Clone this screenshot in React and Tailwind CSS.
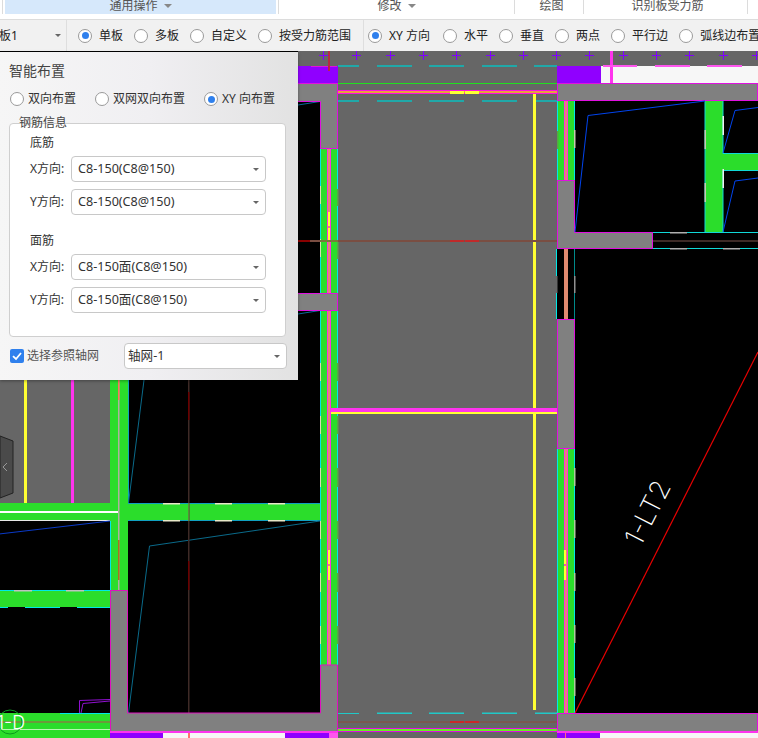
import React from "react";

const FONT = "font-['Noto_Sans','Noto_Sans_CJK_SC',sans-serif]";

function Radio({ on }) {
  return (
    <span className="flex h-[14px] w-[14px] shrink-0 items-center justify-center rounded-full border border-[#9a9a9a] bg-white">
      {on && <span className="h-[7px] w-[7px] rounded-full bg-[#2f80ed]" />}
    </span>
  );
}

function BarRadio({ label, on, w }) {
  return (
    <div className="flex items-center gap-[7px]">
      <Radio on={on} />
      <span className={`whitespace-nowrap text-[12px] leading-none text-[#222] ${w || ""}`}>{label}</span>
    </div>
  );
}

function Caret() {
  return <span className="h-0 w-0 border-x-[3px] border-t-[3px] border-x-transparent border-t-[#666]" />;
}

function Select({ value, w }) {
  return (
    <div className={`flex h-[26px] items-center justify-between rounded-[4px] border border-[#c8c8c8] bg-white pl-[6px] pr-[6px] ${w}`}>
      <span className="whitespace-nowrap text-[12.6px] leading-none text-[#333]">{value}</span>
      <Caret />
    </div>
  );
}

function Row({ label, value }) {
  return (
    <div className="flex items-center">
      <span className="w-[41px] text-[12px] leading-none text-[#333]">{label}</span>
      <Select value={value} w="w-[195px]" />
    </div>
  );
}

function Tab({ w, label, arrow, active, pad }) {
  return (
    <div className={`flex h-[14px] shrink-0 items-start border-r border-[#dcdcdc] ${w}`}>
      <div className={`flex h-[14px] flex-1 items-center justify-center gap-[6px] ${active ? "mr-[2px] bg-[#d6e8fb]" : ""} ${pad || ""}`}>
        <span className="-mt-[2px] whitespace-nowrap text-[12px] leading-none text-[#555]">{label}</span>
        {arrow && <span className="-mt-[2px] h-0 w-0 border-x-[4px] border-t-[4px] border-x-transparent border-t-[#888]" />}
      </div>
    </div>
  );
}

const G = "#2bdd2b", W = "#808080", M = "#e010e0", C = "#00e8e8", BG = "#666666", P = "#9000ff";

function Wall({ x, y, w, h }) {
  return <rect x={x + 0.5} y={y + 0.5} width={w - 1} height={h - 1} fill={W} stroke={M} />;
}

function VBeam({ x, y1, y2 }) {
  const h = y2 - y1;
  return (
    <g>
      <rect x={x} y={y1} width={18} height={h} fill={G} />
      <line x1={x + 0.5} x2={x + 0.5} y1={y1} y2={y2} stroke={C} />
      <line x1={x + 17.5} x2={x + 17.5} y1={y1} y2={y2} stroke={C} />
      <rect x={x + 7} y={y1} width={4} height={h} fill="#e08a70" />
      <line x1={x + 7.5} x2={x + 7.5} y1={y1} y2={y2} stroke="#ff30e0" />
      <line x1={x + 10.5} x2={x + 10.5} y1={y1} y2={y2} stroke="#ff30e0" />
    </g>
  );
}

function Drawing() {
  const crosses = [];
  for (let i = 0; i < 14; i++) crosses.push(Math.round(323 + i * 33.3));
  return (
    <svg className="block h-[687px] w-[758px]" viewBox="0 51 758 687" fontFamily="Inter, sans-serif">
      <rect x="0" y="51" width="758" height="687" fill="#000" />
      <rect x="298" y="51" width="460" height="32" fill={BG} />
      <rect x="338" y="51" width="219" height="687" fill={BG} />
      {crosses.map((x) => (
        <path key={x} d={`M${x - 4} 55.5H${x + 5}M${x + 0.5} 51V60`} stroke="#8000ff" fill="none" />
      ))}
      <rect x="298" y="66" width="40" height="17" fill={P} />
      <line x1="311" x2="337" y1="66.5" y2="66.5" stroke={M} />
      <rect x="557" y="66" width="44" height="17" fill={P} />
      <rect x="601" y="66" width="157" height="17" fill="#f7f7f7" />
      <rect x="610" y="51" width="3" height="32" fill="#ff33ee" />
      {[[603, 637], [655, 690], [707, 742]].map(([a, b]) => (
        <rect key={a} x={a} y="65" width={b - a} height="2" fill="#ff55ee" />
      ))}
      <rect x="328" y="51" width="2" height="20" fill="#b52a40" />
      {[66, 101].map((y) =>
        [[338, 359], [377, 412], [429, 464], [482, 517], [534, 557]].map(([a, b]) => (
          <rect key={y + "-" + a} x={a} y={y - 1} width={b - a} height="2" fill="#20a8a8" />
        ))
      )}
      <line x1="338" x2="557" y1="83.5" y2="83.5" stroke="#20e020" />
      <rect x="338" y="91" width="219" height="3" fill="#e8a040" />
      <line x1="338" x2="557" y1="90.5" y2="90.5" stroke="#ff10e0" />
      <line x1="338" x2="557" y1="93.5" y2="93.5" stroke="#ff10e0" />
      <rect x="450" y="91" width="14" height="3" fill="#ffff33" />
      <rect x="465" y="91" width="14" height="3" fill="#ffff33" />
      <rect x="533" y="94" width="3" height="616" fill="#ffff33" />
      <rect x="298" y="240" width="259" height="2" fill="#7a4e42" />
      <rect x="298" y="240" width="12" height="2" fill="#8a0000" />
      <rect x="450" y="240" width="14" height="2" fill="#c02a2a" />
      <rect x="465" y="240" width="14" height="2" fill="#c02a2a" />
      <rect x="338" y="713" width="21" height="1" fill="#20c8c8" />
      {[[377, 412], [429, 464], [482, 517], [535, 557]].map(([a, b]) => (
        <rect key={a} x={a} y="712.5" width={b - a} height="1.5" fill="#20c8c8" />
      ))}
      <rect x="338" y="721.5" width="219" height="1" fill="#8c4a3c" />
      <rect x="450" y="721" width="14" height="2" fill="#c82a2a" />
      <rect x="465" y="721" width="14" height="2" fill="#c82a2a" />

      <line x1="298" y1="105" x2="320" y2="101.5" stroke="#0a6a9a" />
      <line x1="298" y1="314" x2="320" y2="310.5" stroke="#0a6a9a" />
      <line x1="298" y1="101.5" x2="320" y2="101.5" stroke={M} />

      <VBeam x={320} y1={149} y2={293} />
      <VBeam x={320} y1={310} y2={665} />
      {[[186, 204], [239, 257], [363, 381], [416, 434], [468, 487], [521, 539], [573, 592], [626, 644]].map(([a, b]) => (
        <rect key={a} x="320" y={a} width="1" height={b - a} fill="#d8e0b0" />
      ))}
      {[[189, 206], [242, 259], [363, 381], [416, 434], [468, 487], [521, 539], [573, 592], [626, 644]].map(([a, b]) => (
        <rect key={a} x="337" y={a} width="1.5" height={b - a} fill="#55aa44" />
      ))}
      <rect x="328" y="212" width="2" height="14" fill="#ffff33" />
      <rect x="328" y="228" width="2" height="12" fill="#ffff33" />
      <rect x="328" y="550" width="2" height="14" fill="#ffff33" />
      <rect x="328" y="566" width="2" height="14" fill="#ffff33" />
      <rect x="320" y="240" width="18" height="2" fill="#7a7a3a" />
      <rect x="331" y="408" width="226" height="4" fill="#ff33ee" />
      <rect x="331" y="412" width="226" height="2" fill="#ffff33" />

      <rect x="298" y="83" width="40" height="18" fill={W} />
      <rect x="320" y="83" width="18" height="66" fill={W} />
      <path d="M298 83.5H337.5V148.5H320.5V101.5H298" fill="none" stroke={M} />
      <Wall x={290} y={293} w={48} h={18} />

      <rect x="0" y="380" width="110" height="123" fill={BG} />
      <line x1="110.5" x2="110.5" y1="380" y2="503" stroke={C} />
      <rect x="24" y="380" width="3" height="131" fill="#ffff33" />
      <rect x="71" y="380" width="3" height="131" fill="#ff33ee" />
      <rect x="110" y="380" width="18" height="210" fill={G} />
      <rect x="0" y="503" width="320" height="18" fill={G} />
      <rect x="0" y="511" width="118" height="2" fill="#ffffff" />
      <rect x="118" y="380" width="1.5" height="210" fill="#b0b0a0" />
      <rect x="118" y="380" width="1.5" height="20" fill="#ff7060" />
      <rect x="118" y="540" width="1.5" height="40" fill="#b06a20" />
      <rect x="0" y="520" width="110" height="1" fill="#e8e8e8" />
      <line x1="128" x2="320" y1="503.5" y2="503.5" stroke="#10a0c0" />
      <line x1="128" x2="320" y1="520.5" y2="520.5" stroke="#10a0c0" />
      <line x1="128.5" x2="128.5" y1="380" y2="503" stroke="#10a0c0" />
      <line x1="110.5" x2="110.5" y1="521" y2="590" stroke={C} />
      {[163, 215, 268].map((x) => (
        <g key={x}>
          <rect x={x} y="503" width="17" height="1.5" fill="#e8e8c8" />
          <rect x={x} y="520" width="17" height="1.5" fill="#e8e8c8" />
        </g>
      ))}
      <rect x="0" y="590" width="110" height="18" fill={G} />
      <line x1="0" x2="110" y1="590.5" y2="590.5" stroke={C} />
      <line x1="0" x2="110" y1="607.5" y2="607.5" stroke={C} />
      <rect x="14" y="590" width="18" height="1.5" fill="#c0c0c0" />
      <rect x="66" y="590" width="18" height="1.5" fill="#c0c0c0" />
      <rect x="8" y="607" width="17" height="1.5" fill="#000" />
      <rect x="60" y="607" width="17" height="1.5" fill="#000" />
      <rect x="0" y="713" width="110" height="25" fill={G} />
      <line x1="60" x2="110" y1="713.5" y2="713.5" stroke={C} />
      <rect x="0" y="721" width="110" height="2" fill="#6c9a3a" />
      <rect x="0" y="729" width="110" height="1" fill="#b8f8b0" />
      <path d="M79.5 713L79.5 700.5L110 699.5M81 713L83 703.5L110 701" fill="none" stroke="#9010d0" />
      <circle cx="10" cy="722" r="12" fill="none" stroke="#0a9a20" />
      <text x="-3" y="729" fontSize="18" fill="#ffffff" fontWeight="300">1-D</text>

      <path d="M320 521L149.5 546L128.5 713" fill="none" stroke="#0a6a8a" />
      <path d="M144 380L128.5 503" fill="none" stroke="#0a6a8a" />
      <line x1="-1" y1="534" x2="110" y2="521" stroke="#0a3ac8" />
      <rect x="188" y="380" width="1.5" height="352" fill="#3e2a26" />
      <rect x="188" y="392" width="1.5" height="28" fill="#6a0000" />
      <rect x="188" y="561" width="1.5" height="29" fill="#6a0000" />
      <rect x="188" y="503" width="1.5" height="18" fill="#5a8a3a" />

      <rect x="110" y="590" width="18" height="142" fill={W} />
      <rect x="110" y="713" width="228" height="19" fill={W} />
      <rect x="320" y="665" width="18" height="67" fill={W} />
      <path d="M110.5 731.5V590.5H127.5V713H320.5V665H337.5V731.5Z" fill="none" stroke="#e010c0" />
      <rect x="110" y="732" width="53" height="6" fill={P} />
      <rect x="163" y="733" width="122" height="5" fill="#f7f7f7" />
      <rect x="285" y="733" width="45" height="5" fill={P} />
      <rect x="110" y="731" width="228" height="2" fill="#ff33ee" />
      <rect x="188" y="733" width="2" height="5" fill="#ff7070" />
      <rect x="329" y="733" width="9" height="5" fill="#ff55ee" />
      <rect x="338" y="729" width="219" height="3" fill="#66ee22" />
      <line x1="338" x2="557" y1="728.5" y2="728.5" stroke={M} />
      <line x1="338" x2="557" y1="731.5" y2="731.5" stroke={M} />

      <VBeam x={557} y1={101} y2={180} />
      <rect x="574" y="130" width="1.5" height="18" fill="#c8c8b0" />
      <rect x="557" y="131" width="1.5" height="18" fill="#55aa44" />
      <Wall x={557} y={83} w={201} h={18} />
      <rect x="557" y="180" width="18" height="69" fill={W} />
      <rect x="557" y="232" width="96" height="17" fill={W} />
      <path d="M557.5 248.5V180.5H574.5V232.5H652.5V248.5Z" fill="none" stroke={M} />
      <path d="M705 101L588 115.5L575 232" fill="none" stroke="#0044ee" />
      <rect x="705" y="101" width="18" height="131" fill={G} />
      <rect x="723" y="153" width="35" height="18" fill={G} />
      <path d="M705 101.5V232M723 101V153.5H758M758 170.5H723V232M653 232.5H758M653 248.5H758" fill="none" stroke="#10d8d8" />
      {[[130, 149], [183, 202]].map(([a, b]) => (
        <g key={a}>
          <rect x="704.5" y={a} width="1.5" height={b - a} fill="#c8c8b0" />
          <rect x="722.5" y={a - 14} width="1.5" height={b - a} fill="#f0f0f0" />
        </g>
      ))}
      <path d="M723 153L735 110.5L758 107.5M723 232L735 181L758 178" fill="none" stroke="#0044ee" />
      <rect x="653" y="240" width="105" height="2" fill="#3e2a26" />
      <rect x="670" y="232" width="17" height="1.5" fill="#b0b0b0" />
      <rect x="670" y="248" width="17" height="1.5" fill="#b0b0b0" />
      <rect x="723" y="248" width="17" height="1.5" fill="#b0b0b0" />
      <rect x="564" y="249" width="4" height="70" fill="#e08a70" />
      <line x1="556.5" x2="556.5" y1="249" y2="319" stroke={C} />
      <line x1="574.5" x2="574.5" y1="249" y2="319" stroke="#008a8a" />
      <rect x="574" y="276" width="1.5" height="17" fill="#909090" />
      <rect x="556" y="276" width="1.5" height="17" fill={BG} />
      <Wall x={557} y={319} w={18} h={130} />
      <VBeam x={557} y1={449} y2={713} />
      {[468, 520, 573, 625, 678].map((y) => (
        <rect key={y} x="574" y={y} width="1.5" height="18" fill="#b0c8a0" />
      ))}
      <rect x="564" y="550" width="2" height="14" fill="#ffff33" />
      <rect x="564" y="566" width="2" height="14" fill="#ffff33" />
      <line x1="575" y1="713" x2="758" y2="352" stroke="#e80000" strokeWidth="1.2" />
      <Wall x={557} y={713} w={201} h={19} />
      <rect x="557" y="731" width="201" height="2" fill="#ff33ee" />
      <rect x="557" y="733" width="43" height="5" fill={P} />
      <rect x="600" y="733" width="158" height="5" fill="#f7f7f7" />
      <rect x="565" y="733" width="1" height="5" fill="#ff7070" />
      <text x="0" y="0" fontSize="27" fontWeight="200" fill="#ffffff" textAnchor="middle" transform="translate(656 517) rotate(-63)">1-LT2</text>

      <path d="M0 436L13 441V493L0 498Z" fill="#4a4a4a" stroke="#222" />
      <path d="M7 463L3 467L7 471" fill="none" stroke="#999" />
    </svg>
  );
}

export default function App() {
  return (
    <div className={`relative flex h-[738px] w-[758px] flex-col overflow-hidden bg-black ${FONT}`}>
      <div className="flex h-[20px] shrink-0 border-b border-[#dcdcdc] bg-white pb-[5px]">
        <Tab w="w-[3px]" />
        <Tab w="w-[276px]" active label="通用操作" arrow pad="ml-[2px]" />
        <Tab w="w-[236px]" label="修改" arrow />
        <Tab w="w-[69px]" label="绘图" pad="pl-[5px]" />
        <Tab w="w-[164px]" label="识别板受力筋" pad="pl-[4px]" />
      </div>
      <div className="flex h-[31px] shrink-0 items-center bg-[#f1f1f1]">
        <div className="flex h-full w-[67px] shrink-0 items-center justify-between border-r border-[#dedede] pr-[5px]">
          <span className="-ml-[1px] text-[12px] leading-none text-[#222]">板1</span>
          <Caret />
        </div>
        <div className="flex h-full items-center gap-[11px] border-r border-[#dedede] pl-[11px] pr-[12px]">
          <BarRadio label="单板" on />
          <BarRadio label="多板" />
          <BarRadio label="自定义" />
          <BarRadio label="按受力筋范围" />
        </div>
        <div className="flex h-full items-center gap-[11px] pl-[4px]">
          <BarRadio label="XY 方向" on w="w-[43px]" />
          <BarRadio label="水平" />
          <BarRadio label="垂直" />
          <BarRadio label="两点" />
          <BarRadio label="平行边" />
          <BarRadio label="弧线边布置" />
        </div>
      </div>
      <Drawing />
      <div className="absolute left-0 top-[52px] flex h-[328px] w-[298px] flex-col bg-gradient-to-r from-[#f6f6f6] via-[#f0eff2] to-[#e2e2e2] pl-[9px] pr-[12px] pt-[11px] shadow-[0_1px_3px_rgba(0,0,0,0.35)]">
        <div className="text-[14px] leading-[16px] text-[#444]">智能布置</div>
        <div className="mt-[13px] flex items-center pl-[1px] text-[12px] leading-none text-[#333]">
          <div className="flex w-[85px] items-center gap-[4px]"><Radio /><span>双向布置</span></div>
          <div className="flex w-[109px] items-center gap-[4px]"><Radio /><span>双网双向布置</span></div>
          <div className="flex items-center gap-[4px]"><Radio on /><span>XY 向布置</span></div>
        </div>
        <div className="relative mt-[17px] flex h-[214px] flex-col rounded-[4px] border border-[#cfcfcf] bg-white pl-[20px] pt-[13px]">
          <span className="absolute -top-[7px] left-[9px] text-[12px] leading-none text-[#444]">钢筋信息</span>
          <div className="text-[12px] leading-none text-[#333]">底筋</div>
          <div className="mt-[7px] flex flex-col gap-[7px]">
            <Row label="X方向:" value="C8-150(C8@150)" />
            <Row label="Y方向:" value="C8-150(C8@150)" />
          </div>
          <div className="mt-[20px] text-[12px] leading-none text-[#333]">面筋</div>
          <div className="mt-[7px] flex flex-col gap-[7px]">
            <Row label="X方向:" value="C8-150面(C8@150)" />
            <Row label="Y方向:" value="C8-150面(C8@150)" />
          </div>
        </div>
        <div className="-mr-[1px] mt-[6px] flex items-center justify-between">
          <div className="flex items-center gap-[3px] pl-[1px]">
            <span className="flex h-[14px] w-[14px] items-center justify-center rounded-[2px] bg-[#2f80ed]">
              <svg viewBox="0 0 14 14" className="h-[14px] w-[14px]"><path d="M3 7.2L6 10L11 4" fill="none" stroke="#fff" strokeWidth="1.8" /></svg>
            </span>
            <span className="text-[12px] leading-none text-[#555]">选择参照轴网</span>
          </div>
          <Select value="轴网-1" w="w-[163px] !pl-[3px]" />
        </div>
      </div>
    </div>
  );
}
